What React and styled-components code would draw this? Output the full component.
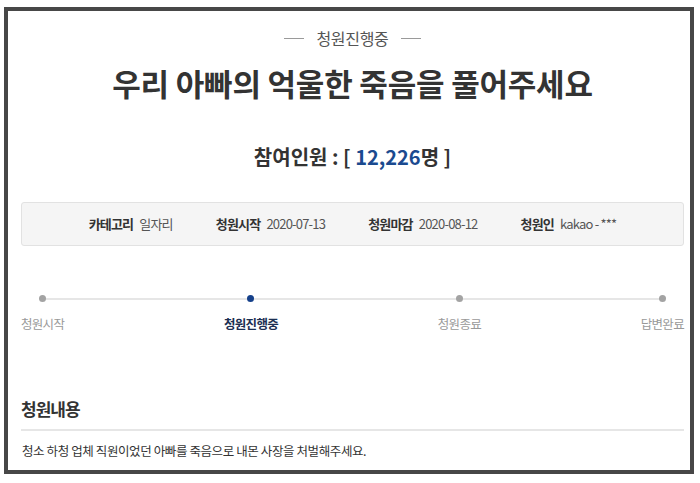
import React from "react";
import styled, { createGlobalStyle } from "styled-components";

const Global = createGlobalStyle`
  html, body { margin: 0; padding: 0; background: #fff; }
  body {
    padding: 7px 6px 9px 4px;
    font-family: "Noto Sans CJK KR", "Noto Sans", sans-serif;
    color: #333;
  }
`;

const Frame = styled.div`
  box-sizing: border-box;
  width: 690px;
  height: 467px;
  border: 4px solid #474747;
  padding: 17px 6px 0 13px;
  overflow: hidden;
`;

const Status = styled.div`
  display: flex;
  align-items: center;
  justify-content: center;
  gap: 12px;
  font-size: 16px;
  line-height: 20px;
  letter-spacing: -0.3px;
  color: #555;
  &::before, &::after {
    content: "";
    width: 20px;
    height: 1px;
    background: #9a9a9a;
  }
`;

const Title = styled.h1`
  margin: 15px 0 0;
  text-align: center;
  font-size: 31px;
  line-height: 40px;
  font-weight: 700;
  letter-spacing: -0.2px;
  color: #333;
`;

const Count = styled.div`
  margin-top: 39px;
  text-align: center;
  font-size: 20px;
  line-height: 30px;
  font-weight: 700;
  letter-spacing: 0;
  color: #333;
`;

const Num = styled.span`
  color: #1b4a8f;
`;

const InfoBox = styled.div`
  box-sizing: border-box;
  margin-top: 30px;
  height: 44px;
  border: 1px solid #e2e2e2;
  border-radius: 3px;
  background: #f5f5f5;
  display: flex;
  align-items: center;
  justify-content: center;
  gap: 43px;
`;

const InfoItem = styled.div`
  display: flex;
  gap: 6px;
  font-size: 13px;
  line-height: 18px;
  letter-spacing: -0.8px;
`;

const Label = styled.span`
  font-weight: 700;
  color: #333;
`;

const Value = styled.span`
  color: #555;
`;

const Steps = styled.div`
  position: relative;
  margin-top: 49px;
  display: flex;
  justify-content: space-between;
  &::before {
    content: "";
    position: absolute;
    top: 3px;
    left: 22px;
    right: 22px;
    height: 2px;
    background: #e6e6e6;
  }
`;

const Step = styled.div`
  position: relative;
  display: flex;
  flex-direction: column;
  align-items: center;
  gap: 13px;
`;

const Dot = styled.span`
  width: 7px;
  height: 7px;
  border-radius: 50%;
  background: ${(p) => (p.$active ? "#15408a" : "#a3a3a3")};
`;

const StepLabel = styled.span`
  font-size: 12.5px;
  line-height: 18px;
  letter-spacing: -0.7px;
  font-weight: ${(p) => (p.$active ? 700 : 400)};
  color: ${(p) => (p.$active ? "#1c2f52" : "#999")};
`;

const SectionHead = styled.h2`
  margin: 64px 0 0;
  padding-bottom: 8px;
  border-bottom: 2px solid #e6e6e6;
  font-size: 17px;
  line-height: 24px;
  font-weight: 700;
  letter-spacing: -1px;
  color: #333;
`;

const Body = styled.p`
  margin: 11px 0 0 1px;
  font-size: 12.5px;
  line-height: 18px;
  letter-spacing: -0.4px;
  color: #333;
`;

const info = [
  ["카테고리", "일자리"],
  ["청원시작", "2020-07-13"],
  ["청원마감", "2020-08-12"],
  ["청원인", "kakao - ***"],
];

const steps = [
  { name: "청원시작" },
  { name: "청원진행중", active: true },
  { name: "청원종료" },
  { name: "답변완료" },
];

export default function App() {
  return (
    <>
      <Global />
      <Frame>
        <Status>청원진행중</Status>
        <Title>우리 아빠의 억울한 죽음을 풀어주세요</Title>
        <Count>
          참여인원 : [ <Num>12,226</Num>명 ]
        </Count>
        <InfoBox>
          {info.map(([k, v]) => (
            <InfoItem key={k}>
              <Label>{k}</Label>
              <Value>{v}</Value>
            </InfoItem>
          ))}
        </InfoBox>
        <Steps>
          {steps.map((s) => (
            <Step key={s.name}>
              <Dot $active={s.active} />
              <StepLabel $active={s.active}>{s.name}</StepLabel>
            </Step>
          ))}
        </Steps>
        <SectionHead>청원내용</SectionHead>
        <Body>청소 하청 업체 직원이었던 아빠를 죽음으로 내몬 사장을 처벌해주세요.</Body>
      </Frame>
    </>
  );
}
